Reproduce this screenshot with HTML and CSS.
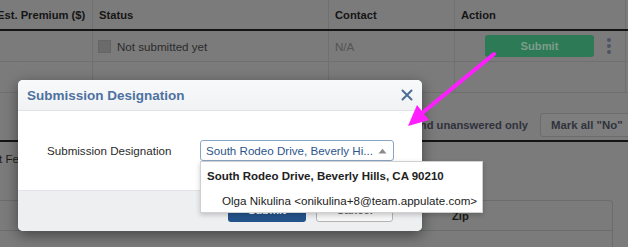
FILE: index.html
```html
<!DOCTYPE html>
<html>
<head>
<meta charset="utf-8">
<link rel="stylesheet" href="styles.css">
</head>
<body>
<div class="page">
  <div class="table">
    <div class="row head">
      <div class="cell c1">Est. Premium ($)</div>
      <div class="cell">Status</div>
      <div class="cell">Contact</div>
      <div class="cell">Action</div>
      <div class="cell"></div>
    </div>
    <div class="row">
      <div class="cell c1"></div>
      <div class="cell status"><span class="check"></span>Not submitted yet</div>
      <div class="cell na">N/A</div>
      <div class="cell action"><span class="green-btn">Submit</span><span class="kebab"><i></i><i></i><i></i></span></div>
      <div class="cell"></div>
    </div>
    <div class="row">
      <div class="cell c1"></div>
      <div class="cell"></div>
      <div class="cell"></div>
      <div class="cell"></div>
      <div class="cell"></div>
    </div>
  </div>

  <div class="toolbar">
    <span class="filter">Show answered and unanswered only</span>
    <span class="mark-btn">Mark all "No"</span>
  </div>

  <div class="lower">
    <div class="fees">t Fees</div>
    <div class="panel">
      <div class="panel-head"><span class="zip">Zip</span></div>
      <div class="panel-row"></div>
    </div>
  </div>

  <div class="modal">
    <div class="modal-head">
      <span class="modal-title">Submission Designation</span>
      <svg class="close" width="12" height="12" viewBox="0 0 12 12"><path d="M1.5 1.5 L10.5 10.5 M10.5 1.5 L1.5 10.5" stroke="#4c6d96" stroke-width="2" stroke-linecap="round"/></svg>
    </div>
    <div class="modal-body">
      <span class="label">Submission Designation</span>
      <div class="select">
        <span class="select-text">South Rodeo Drive, Beverly Hi...</span>
        <svg class="caret" width="9" height="6" viewBox="0 0 9 6"><path d="M0.5 5.5 L4.5 0.8 L8.5 5.5 Z" fill="#8a8a8a"/></svg>
      </div>
    </div>
    <div class="modal-foot">
      <span class="btn primary">Submit</span>
      <span class="btn secondary">Cancel</span>
    </div>
    <div class="dropdown">
      <div class="opt group">South Rodeo Drive, Beverly Hills, CA 90210</div>
      <div class="opt item">Olga Nikulina &lt;onikulina+8@team.appulate.com&gt;</div>
    </div>
  </div>

  <svg class="arrow" width="628" height="247" viewBox="0 0 628 247">
    <line x1="494" y1="54" x2="421" y2="114" stroke="#ff1eff" stroke-width="4" stroke-linecap="round"/>
    <polygon points="408,126 417,105 429,120" fill="#ff1eff"/>
  </svg>
</div>
</body>
</html>
```

FILE: styles.css
```css
* { box-sizing: border-box; }
html, body { margin: 0; padding: 0; }
body {
  font-family: "Liberation Sans", Arial, sans-serif;
  font-size: 12px;
  background: #7b7b7b;
}
.page {
  position: relative;
  width: 628px;
  height: 247px;
  overflow: hidden;
  background: #7b7b7b;
  color: #1e1e1e;
  white-space: nowrap;
}

/* background table */
.table { margin-left: -3px; width: 660px; }
.row {
  display: grid;
  grid-template-columns: 95px 236px 126px 171px 1fr;
  height: 31px;
  border-bottom: 1px solid #707070;
}
.row.head {
  height: 31px;
  border-bottom: 2px solid #141414;
  font-weight: bold;
  font-size: 11.2px;
  color: #151515;
}
.cell {
  display: flex;
  align-items: center;
  padding-left: 6px;
  border-left: 1px solid #707070;
  overflow: hidden;
}
.cell.c1 { border-left: none; padding-left: 0; }
.status { color: #2b2b2b; font-size: 11.6px; }
.check {
  width: 13px; height: 13px;
  background: #6b6b6b;
  border: 1px solid #656565;
  margin-right: 6px;
  margin-left: -1px;
  flex: none;
}
.na { color: #545454; font-size: 11.6px; }
.action { padding-left: 30px; overflow: visible; }
.green-btn {
  width: 109px; height: 22px;
  background: #2c7a56;
  border-radius: 3px;
  color: #7e9d8b;
  font-weight: bold;
  font-size: 11.2px;
  display: flex; align-items: center; justify-content: center;
  flex: none;
}
.kebab {
  display: flex; flex-direction: column; gap: 2px;
  margin-left: 13px;
}
.kebab i {
  display: block; width: 4px; height: 4px; border-radius: 50%;
  background: #4d5465;
}

/* toolbar */
.toolbar {
  display: flex;
  justify-content: flex-end;
  align-items: center;
  height: 49px;
  padding-top: 20px;
  padding-bottom: 4px;
  margin-right: -20px;
  border-bottom: 2px solid #141414;
}
.filter { font-weight: bold; color: #2f323b; font-size: 11.2px; margin-right: 12px; }
.mark-btn {
  height: 24px;
  width: 108px;
  border: 1px solid #6c6c6c;
  border-radius: 3px;
  background: #7e7e7e;
  color: #30333c;
  font-weight: bold;
  font-size: 11.4px;
  display: flex; align-items: center;
  padding-left: 10px;
  flex: none;
}

/* lower */
.lower { position: relative; }
.fees { font-size: 11.6px; color: #1e1e1e; margin-left: -1px; height: 58px; padding-top: 10px; }
.panel {
  width: 623px;
  margin-left: -10px;
  border: 1px solid #6c6c6c;
  border-radius: 4px 4px 0 0;
  border-bottom: none;
}
.panel-head {
  height: 30px;
  border-bottom: 1px solid #6c6c6c;
  display: flex; align-items: center;
  padding-left: 461px;
}
.zip { font-weight: bold; color: #1a1a1a; font-size: 11.2px; }
.panel-row { height: 20px; }

/* modal */
.modal {
  position: absolute;
  left: 18px; top: 80px;
  width: 404px; height: 151px;
  background: #fff;
  border-radius: 5px;
  box-shadow: 0 4px 14px rgba(0,0,0,0.45);
  display: flex; flex-direction: column;
}
.modal-head {
  height: 31px;
  background: linear-gradient(#f8f9fa, #f1f2f4);
  border-bottom: 1px solid #dfe4ea;
  border-radius: 5px 5px 0 0;
  display: flex; align-items: center; justify-content: space-between;
  padding: 0 9px 0 9px;
}
.modal-title { font-weight: bold; font-size: 13.5px; color: #4d71a0; }
.modal-body {
  height: 79px;
  display: flex;
  align-items: flex-start;
  padding: 29px 0 0 29px;
}
.label { width: 153px; height: 21px; display: flex; align-items: center; color: #2a2a2a; font-size: 11.6px; flex: none; }
.select {
  width: 194px; height: 21px;
  border: 1px solid #8aa6c6;
  border-radius: 3px;
  display: flex; align-items: center; justify-content: space-between;
  padding: 0 6px 0 5px;
  color: #2d558a;
  font-size: 11.6px;
  flex: none;
}
.modal-foot {
  flex: 1;
  background: #eeeff1;
  border-top: 1px solid #e2e3e6;
  border-radius: 0 0 5px 5px;
  display: flex; justify-content: flex-end; align-items: flex-start;
  gap: 10px;
  padding: 7px 29px 0 0;
}
.btn {
  height: 24px; border-radius: 3px;
  display: flex; align-items: center; justify-content: center;
  font-weight: bold;
  font-size: 11.2px;
}
.btn.primary { width: 78px; background: #24538a; color: #fff; }
.btn.secondary { width: 77px; background: #f7f7f7; border: 1px solid #b4b4b4; color: #666; }

.dropdown {
  position: absolute;
  left: 182px; top: 81px;
  width: 283px; height: 52px;
  background: #fff;
  border: 1px solid #d0d0d0;
  box-shadow: 0 2px 5px rgba(0,0,0,0.2);
}
.opt { height: 25px; display: flex; align-items: center; color: #222; }
.opt.group { font-weight: bold; font-size: 11.5px; padding-left: 6px; padding-top: 2px; }
.opt.item { font-size: 11.6px; padding-left: 21px; padding-top: 2px; }

.arrow { position: absolute; left: 0; top: 0; pointer-events: none; }
```
